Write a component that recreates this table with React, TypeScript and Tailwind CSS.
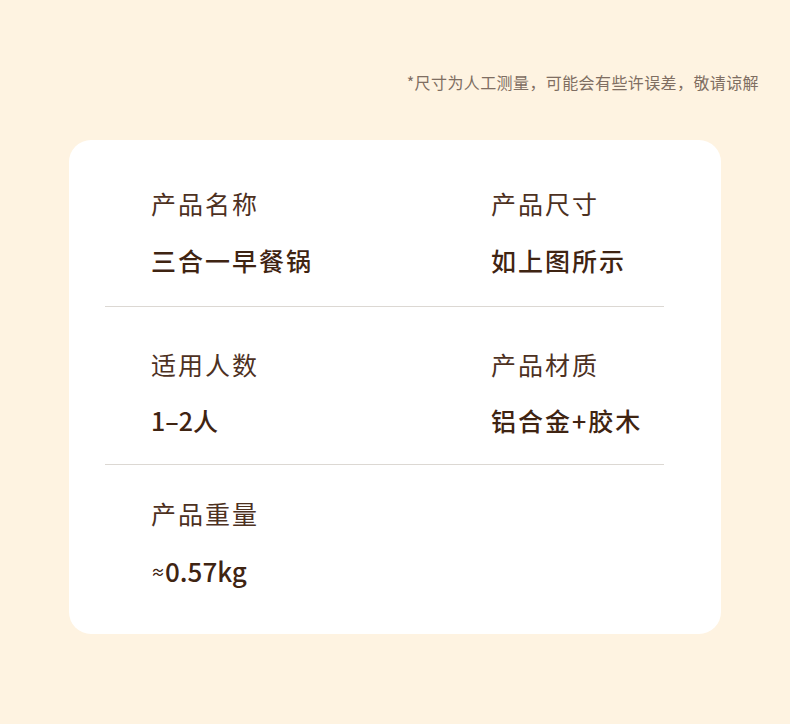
import React from 'react';

const font = { fontFamily: '"Noto Sans CJK SC", "Noto Sans", sans-serif' };

interface Spec {
  label: string;
  value: React.ReactNode;
}

function Cell({ spec, labelGap }: { spec: Spec | null; labelGap: string }) {
  if (!spec) return <div />;
  return (
    <div className="flex flex-col">
      <div className="text-[25px] leading-[24px] tracking-[2px] text-[#4d311f] font-normal">{spec.label}</div>
      <div className={`${labelGap} text-[25px] leading-[24px] tracking-[2px] text-[#3f2412] font-medium`}>{spec.value}</div>
    </div>
  );
}

export default function App() {
  return (
    <div className="w-[790px] h-[724px] bg-[#fef3e1] pt-[74px]" style={font}>
      <p className="text-[16px] leading-[16px] tracking-[0.4px] text-right pr-[31px] text-[#7f6e62]">
        *尺寸为人工测量，可能会有些许误差，敬请谅解
      </p>

      <div className="mt-[50px] ml-[69px] w-[652px] h-[494px] bg-white rounded-[22px] pt-[51px]">
        <div className="grid grid-cols-[340px_1fr] pl-[82px]">
          <Cell spec={{ label: '产品名称', value: '三合一早餐锅' }} labelGap="mt-[33px]" />
          <Cell spec={{ label: '产品尺寸', value: '如上图所示' }} labelGap="mt-[33px]" />
        </div>
        <div className="mt-[34px] ml-[36px] mr-[57px] h-px bg-[#dcd8d3]" />

        <div className="grid grid-cols-[340px_1fr] pl-[82px] pt-[45px]">
          <Cell
            spec={{
              label: '适用人数',
              value: (
                <span className="tracking-normal">
                  1–2<span className="tracking-[2px]">人</span>
                </span>
              ),
            }}
            labelGap="mt-[32px]"
          />
          <Cell spec={{ label: '产品材质', value: '铝合金+胶木' }} labelGap="mt-[32px]" />
        </div>
        <div className="mt-[32px] ml-[36px] mr-[57px] h-px bg-[#dcd8d3]" />

        <div className="grid grid-cols-[340px_1fr] pl-[82px] pt-[36px]">
          <Cell
            spec={{
              label: '产品重量',
              value: (
                <span className="tracking-normal">
                  <span className="text-[14px] align-[5px]">≈</span>
                  <span className="text-[26px]">0.57kg</span>
                </span>
              ),
            }}
            labelGap="mt-[34px]"
          />
          <Cell spec={null} labelGap="" />
        </div>
      </div>
    </div>
  );
}
